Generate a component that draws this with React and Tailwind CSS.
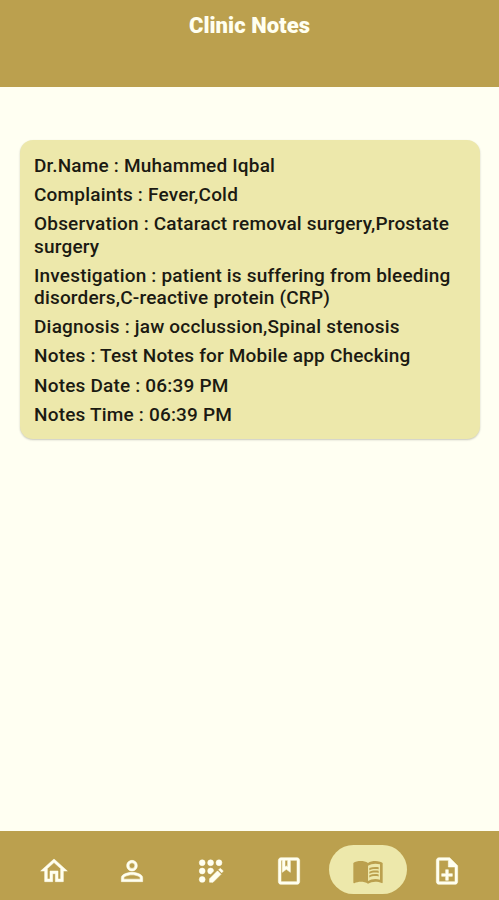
import React from "react";
import { MdOutlineHome, MdPersonOutline, MdOutlineClass, MdMenuBook, MdOutlineNoteAdd } from "react-icons/md";

const notes = [
  { label: "Dr.Name", value: "Muhammed Iqbal" },
  { label: "Complaints", value: "Fever,Cold" },
  { label: "Observation", value: "Cataract removal surgery,Prostate surgery" },
  { label: "Investigation", value: "patient is suffering from bleeding disorders,C-reactive protein (CRP)" },
  { label: "Diagnosis", value: "jaw occlussion,Spinal stenosis" },
  { label: "Notes", value: "Test Notes for Mobile app Checking" },
  { label: "Notes Date", value: "06:39 PM" },
  { label: "Notes Time", value: "06:39 PM" },
];

// dot grid with a pencil over its lower right corner
const RegistrationIcon = ({ className }) => (
  <svg viewBox="0 0 24 24" fill="currentColor" stroke="currentColor" className={className}>
    <circle cx="5.4" cy="5.8" r="2.2" />
    <circle cx="11.7" cy="5.8" r="2.2" />
    <circle cx="18" cy="5.8" r="2.2" />
    <circle cx="5.4" cy="12" r="2.2" />
    <path d="M13.9 12.1l-2.1 2.1A2.2 2.2 0 1 1 13.9 12.1z" />
    <circle cx="5.4" cy="18.3" r="2.2" />
    <path d="M10.9 20.4v-2.5l6-6 2.6 2.6-6 6z" />
    <path d="M17.7 11.1l.8-.8q.5-.5 1 0l1.3 1.3q.5.5 0 1l-.8.8z" />
  </svg>
);

const tabs = [
  { name: "Home", Icon: MdOutlineHome },
  { name: "Profile", Icon: MdPersonOutline },
  { name: "Registration", Icon: RegistrationIcon },
  { name: "Records", Icon: MdOutlineClass },
  { name: "Clinic notes", Icon: MdMenuBook, active: true },
  { name: "Add note", Icon: MdOutlineNoteAdd },
];

const NotesCard = () => (
  <div className="mx-[19.5px] mt-[53px] flex flex-col gap-[7px] rounded-[13px] bg-[#ede8ab] pt-[15px] pb-[13px] pl-[14.5px] pr-[13px] shadow-[0_1px_2px_rgba(0,0,0,0.22)]">
    {notes.map(({ label, value }) => (
      <p key={label} className="text-[19px] leading-[22.2px] font-medium tracking-[0.19px] text-[#1b1a12]">
        {`${label} : ${value}`}
      </p>
    ))}
  </div>
);

const BottomNav = () => (
  <nav className="grid h-[69px] grid-cols-6 bg-[#bba04e] pt-[14px] pr-[13px] pl-[14.4px]">
    {tabs.map(({ name, Icon, active }) => (
      <button
        key={name}
        aria-label={name}
        className={`flex h-[49px] items-center justify-center rounded-full pt-[2px] ${active ? "bg-[#ede8ab] text-[#bba04e]" : "text-[#fffff0]"}`}
      >
        <Icon className={active ? "size-[32px]" : "size-[32px] stroke-[0.4px] [&>path[fill=none]]:stroke-none"} />
      </button>
    ))}
  </nav>
);

const App = () => {
  return (
    <div className="flex h-screen flex-col bg-[#fffff2] font-['Roboto',sans-serif]">
      <header className="h-[87px] bg-[#bba04e] pt-[11px] text-center">
        <h1 className="text-[22px] leading-[29px] font-black tracking-[0.05px] text-[#fffff0]">Clinic Notes</h1>
      </header>
      <main className="flex-1">
        <NotesCard />
      </main>
      <BottomNav />
    </div>
  );
};

export default App;
